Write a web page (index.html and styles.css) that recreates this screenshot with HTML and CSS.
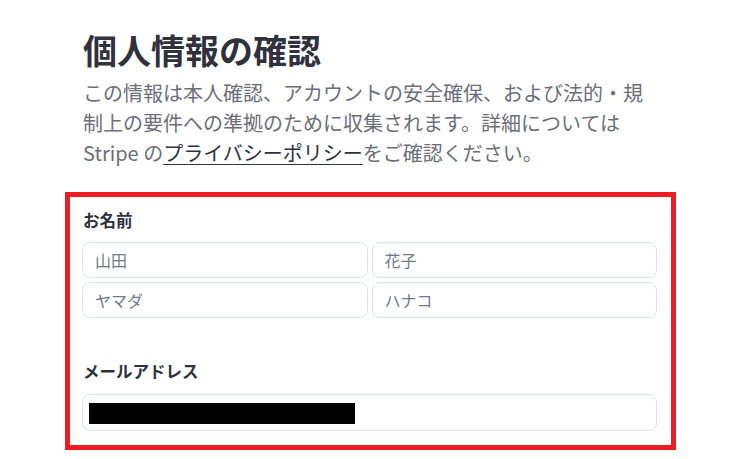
FILE: index.html
```html
<!DOCTYPE html>
<html lang="ja">
<head>
<meta charset="utf-8">
<title>個人情報の確認</title>
<link rel="stylesheet" href="styles.css">
</head>
<body>
<div class="page">
  <div class="intro">
    <h1 class="title">個人情報の確認</h1>
    <p class="desc">この情報は本人確認、アカウントの安全確保、および法的・規制上の要件への準拠のために収集されます。詳細については Stripe の<a class="link" href="#">プライバシーポリシー</a>をご確認ください。</p>
  </div>
  <form class="form-box">
    <div class="label label-name">お名前</div>
    <div class="name-grid">
      <input class="field" type="text" placeholder="山田">
      <input class="field" type="text" placeholder="花子">
      <input class="field" type="text" placeholder="ヤマダ">
      <input class="field" type="text" placeholder="ハナコ">
    </div>
    <div class="label label-email">メールアドレス</div>
    <div class="email-field"><span class="redact"></span></div>
  </form>
</div>
</body>
</html>
```

FILE: styles.css
```css
html, body {
  margin: 0;
  padding: 0;
  background: #ffffff;
}

body {
  font-family: "Noto Sans CJK JP", "Noto Sans", sans-serif;
  color: #30313d;
}

.page {
  padding-top: 30px;
}

.intro {
  margin-left: 83px;
  width: 566px;
}

.title {
  margin: 0;
  font-size: 34px;
  line-height: 40px;
  font-weight: 700;
  color: #30313d;
}

.desc {
  margin: 8px 0 0 0;
  font-size: 20px;
  line-height: 30px;
  color: #6d6e78;
}

.link {
  color: #30313d;
  text-decoration: underline;
  text-decoration-thickness: 1px;
  text-underline-offset: 3px;
}

.form-box {
  display: block;
  box-sizing: border-box;
  width: 611px;
  margin: 24px 0 0 65px;
  border: 5px solid #ed1c24;
  padding: 12px 14px 14px 12px;
}

.label {
  font-size: 16.5px;
  font-weight: 700;
  color: #30313d;
  padding-left: 1px;
}

.label-name {
  line-height: 22px;
}

.label-email {
  line-height: 24px;
  margin-top: 41px;
}

.name-grid {
  margin-top: 11px;
  display: grid;
  grid-template-columns: 1fr 1fr;
  grid-auto-rows: 36px;
  gap: 4px;
}

.field {
  box-sizing: border-box;
  width: 100%;
  height: 36px;
  margin: 0;
  border: 1px solid #dde3e9;
  border-radius: 8px;
  padding: 0 12px;
  font-family: "Noto Sans CJK JP", "Noto Sans", sans-serif;
  font-size: 16px;
  color: #30313d;
  background: #ffffff;
  outline: none;
}

.field::placeholder {
  color: #727a8a;
  opacity: 1;
}

.email-field {
  box-sizing: border-box;
  margin-top: 11px;
  height: 37px;
  border: 1px solid #dde3e9;
  border-radius: 8px;
  padding: 8px 0 0 6px;
}

.redact {
  display: block;
  width: 266px;
  height: 21px;
  background: #000000;
}
```
